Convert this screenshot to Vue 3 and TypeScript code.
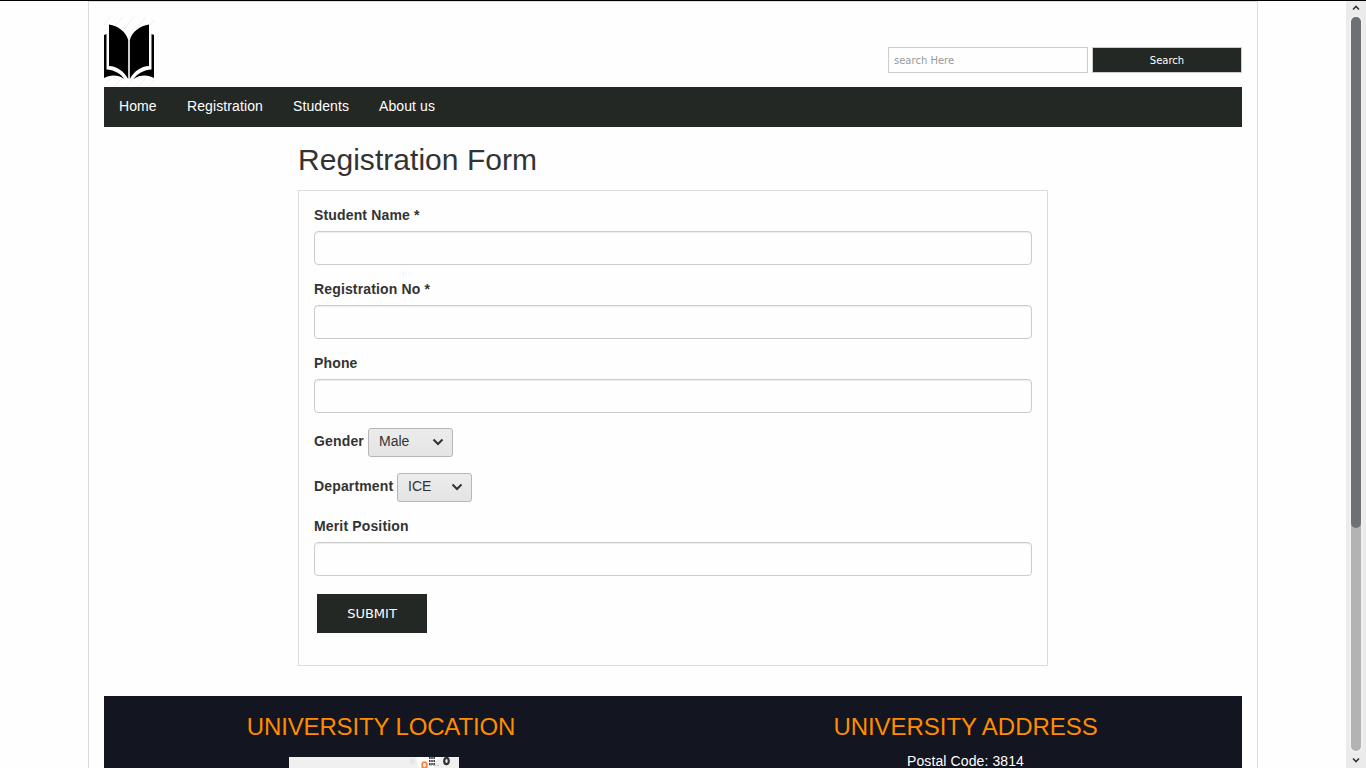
<script setup lang="ts">
import { ref } from 'vue'

interface Field {
  id: string
  label: string
}

const navItems = [
  { text: 'Home', width: 38 },
  { text: 'Registration', width: 76 },
  { text: 'Students', width: 56 },
  { text: 'About us', width: 56 },
]
const fields: Field[] = [
  { id: 'name', label: 'Student Name *' },
  { id: 'reg', label: 'Registration No *' },
  { id: 'phone', label: 'Phone' },
]
const values = ref<Record<string, string>>({ name: '', reg: '', phone: '', merit: '' })
const query = ref('')
</script>

<template>
  <div class="screen">
    <div class="page">
      <div class="container">
        <header class="header">
          <svg class="logo" width="50" height="70" viewBox="0 0 50 70">
            <g stroke="#eeeeee" stroke-width="1">
              <path d="M0 8L6 0M8 12L19 0M20 12L30 0M32 12L42 0M42 12L50 3M0 69L6 62M10 70L18 61M22 70L30 61M34 70L42 61M44 70L50 63" />
            </g>
            <path d="M0 18L2.500 17V52.500C10 53 16 56 20.500 62C14 57.500 6 57.500 0 61Z" />
            <path d="M50 18L47.500 17V52.500C40 53 34 56 29.500 62C36 57.500 44 57.500 50 61Z" />
            <path d="M5 7.500C14 8.500 22 15 24.200 23V62C20 54 13 49.500 5 49Z" />
            <path d="M45 7.500C36 8.500 28 15 25.800 23V62C30 54 37 49.500 45 49Z" />
          </svg>
          <form class="search" @submit.prevent>
            <input v-model="query" class="search-input" type="text" placeholder="search Here" />
            <button class="search-btn" type="submit">Search</button>
          </form>
        </header>
        <nav class="nav">
          <a v-for="item in navItems" :key="item.text" class="nav-link" :style="{ width: item.width + 'px' }">{{ item.text }}</a>
        </nav>
        <main class="main">
          <h2 class="title">Registration Form</h2>
          <form class="card" @submit.prevent>
            <div v-for="f in fields" :key="f.id" class="group">
              <label class="label" :for="f.id">{{ f.label }}</label>
              <input :id="f.id" v-model="values[f.id]" class="control" type="text" />
            </div>
            <div class="group inline gender">
              <span class="label">Gender</span>
              <div class="select male">
                <span>Male</span>
                <svg width="12" height="8" viewBox="0 0 12 8"><path d="M1.500 1.500L6 6L10.500 1.500" fill="none" stroke="#2e3436" stroke-width="2" /></svg>
              </div>
            </div>
            <div class="group inline">
              <span class="label">Department</span>
              <div class="select ice">
                <span>ICE</span>
                <svg width="12" height="8" viewBox="0 0 12 8"><path d="M1.500 1.500L6 6L10.500 1.500" fill="none" stroke="#2e3436" stroke-width="2" /></svg>
              </div>
            </div>
            <div class="group">
              <label class="label" for="merit">Merit Position</label>
              <input id="merit" v-model="values.merit" class="control" type="text" />
            </div>
            <button class="submit" type="submit">SUBMIT</button>
          </form>
        </main>
        <footer class="footer">
          <section class="foot-col location">
            <h3>UNIVERSITY LOCATION</h3>
            <svg class="map" width="170" height="30" viewBox="0 0 170 30">
              <rect width="170" height="30" fill="#f0f0f0" />
              <rect x="121" y="2" width="5" height="5" fill="#e6e6e6" />
              <path d="M127 0H152L145 5V11H130Z" fill="#fff" />
              <ellipse cx="135.500" cy="8" rx="2.400" ry="2.800" fill="#fff" stroke="#ff7f45" stroke-width="1.700" />
              <path d="M132.500 10.500H138.500" stroke="#ff7f45" stroke-width="1" />
              <path d="M140 1H146M140 4H146M140 7H146" stroke="#444" stroke-width="1.800" stroke-dasharray="1.600 .6" />
              <path d="M140 8.500H150" stroke="#f4b59d" stroke-width="1" stroke-dasharray="3 1" />
              <ellipse cx="157.500" cy="4" rx="2.300" ry="3.200" fill="#eee" stroke="#333" stroke-width="2.200" />
            </svg>
          </section>
          <section class="foot-col address">
            <h3>UNIVERSITY ADDRESS</h3>
            <p>Postal Code: 3814</p>
          </section>
        </footer>
      </div>
    </div>
    <div class="scrollbar">
      <svg class="arrow" width="8" height="6" viewBox="0 0 8 6"><path d="M1 4.500L4 1.500L7 4.500" fill="none" stroke="#2e3436" stroke-width="1.600" /></svg>
      <div class="track"><div class="thumb"></div></div>
      <svg class="arrow" width="8" height="6" viewBox="0 0 8 6"><path d="M1 1.500L4 4.500L7 1.500" fill="none" stroke="#2e3436" stroke-width="1.600" /></svg>
    </div>
  </div>
</template>

<style>
body {
  margin: 0;
  overflow: hidden;
}
</style>

<style scoped>
* {
  box-sizing: border-box;
}
.screen {
  display: flex;
  width: 1366px;
  height: 768px;
  overflow: hidden;
  border-top: 1px solid #000;
  background: #fefefe;
  color: #333;
  font: 14px/20px "Nimbus Sans", "Liberation Sans", Arial, sans-serif;
}
.page {
  width: 1346px;
  height: 767px;
  overflow: hidden;
}
.container {
  width: 1170px;
  margin: 0 auto;
  padding: 0 15px;
  border: 1px solid #ddd;
}
.header {
  display: flex;
  justify-content: space-between;
  height: 85px;
  padding-top: 15px;
}
.logo {
  display: block;
}
.search {
  display: flex;
  gap: 4px;
  height: 26px;
  margin-top: 30px;
}
.search-input,
.search-btn {
  height: 26px;
  border: 1px solid #ccc;
  border-radius: 0;
  font: 10px/14px "DejaVu Sans", sans-serif;
}
.search-input {
  width: 200px;
  padding: 1px 5px;
  background: #fefefe;
}
.search-input::placeholder {
  color: #999;
}
.search-btn {
  width: 150px;
  padding: 2px 0 0;
  background: #232825;
  color: #fff;
}
.nav {
  display: flex;
  gap: 30px;
  height: 40px;
  padding: 9px 15px;
  background: #232825;
}
.nav-link {
  color: #fff;
  letter-spacing: 0.1px;
  white-space: nowrap;
}
.main {
  width: 750px;
  margin: 0 auto;
}
.title {
  margin: 0;
  padding-top: 16px;
  height: 63px;
  font-size: 30px;
  font-weight: 400;
  line-height: 33px;
  letter-spacing: 0.04px;
}
.card {
  height: 476px;
  padding: 15px;
  border: 1px solid #ddd;
}
.group {
  margin-bottom: 15px;
}
.label {
  display: block;
  height: 25px;
  line-height: 18px;
  font-weight: 700;
  letter-spacing: 0.15px;
  white-space: nowrap;
}
.control {
  display: block;
  width: 100%;
  height: 34px;
  padding: 6px 12px;
  border: 1px solid #ccc;
  border-radius: 4px;
  background: #fefefe;
  box-shadow: inset 0 1px 1px rgba(0, 0, 0, 0.075);
  font: inherit;
}
.inline {
  display: flex;
  align-items: center;
  height: 29px;
}
.gender {
  margin-bottom: 16px;
}
.inline .label {
  height: 29px;
  line-height: 27px;
}
.gender .label {
  width: 54px;
}
.inline:not(.gender) .label {
  width: 83px;
}
.select {
  display: flex;
  align-items: center;
  justify-content: space-between;
  height: 29px;
  padding: 0 8px 3px 10px;
  border: 1px solid #b6b6b6;
  border-radius: 3px;
  background: linear-gradient(#ececec, #e4e4e4);
}
.select svg {
  margin-top: 2px;
}
.male {
  width: 85px;
}
.ice {
  width: 75px;
}
.submit {
  display: block;
  width: 110px;
  height: 39px;
  margin: 18px 3px 0;
  padding: 0;
  border: 0;
  background: #232825;
  color: #fff;
  font: 13px/16px "DejaVu Sans", sans-serif;
}
.footer {
  display: flex;
  height: 300px;
  margin-top: 30px;
  background: #131520;
  color: #fff;
}
.foot-col {
  display: flex;
  flex-direction: column;
  align-items: center;
}
.location {
  width: 554px;
}
.location h3 {
  letter-spacing: -0.15px;
}
.address {
  width: 584px;
  padding-left: 31px;
}
.address h3 {
  letter-spacing: -0.04px;
}
.foot-col h3 {
  margin: 17px 0 0;
  height: 38px;
  color: #ff8c00;
  font-size: 24px;
  font-weight: 400;
  line-height: 27px;
  white-space: nowrap;
}
.foot-col p {
  margin: 0;
  letter-spacing: 0.1px;
}
.map {
  display: block;
  margin: 6px 14px 0 0;
}
.scrollbar {
  display: flex;
  flex-direction: column;
  align-items: center;
  width: 20px;
  height: 767px;
  padding: 4px 0;
  background: #ebebeb;
}
.arrow {
  flex: none;
}
.track {
  width: 10px;
  height: 734px;
  margin: 6px 0 6px;
  border-radius: 5px;
  background: #b2b3b5;
  box-shadow: 0 0 0 2px #f0f0f0;
}
.thumb {
  height: 511px;
  border-radius: 5px;
  background: #6d7175;
}
</style>
